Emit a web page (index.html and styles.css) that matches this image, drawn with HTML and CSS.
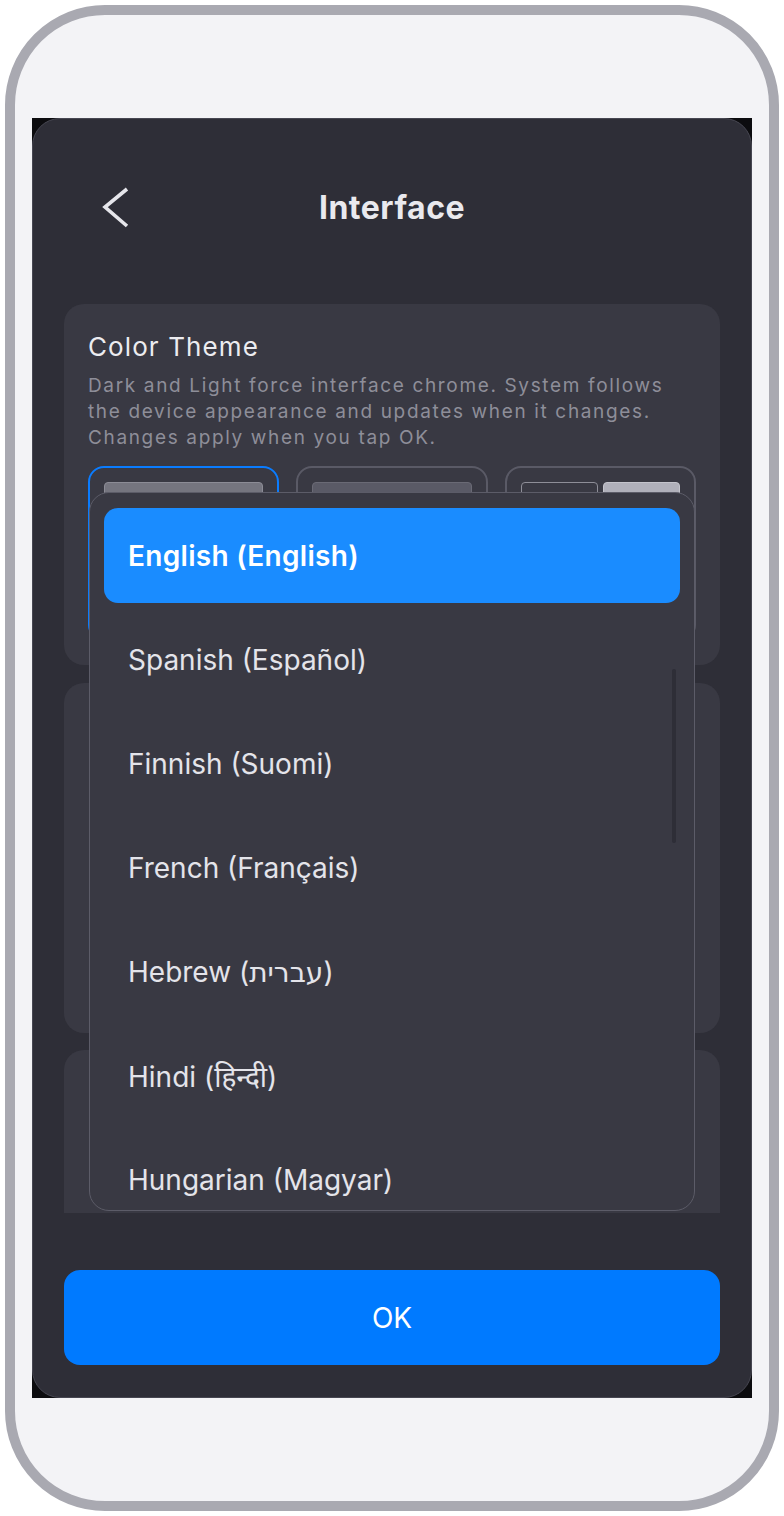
FILE: index.html
```html
<!DOCTYPE html>
<html lang="en">
<head>
<meta charset="utf-8">
<title>Interface</title>
<link rel="stylesheet" href="styles.css">
</head>
<body>
<div class="phone">
  <div class="screen">
    <div class="panel">
      <header class="header">
        <button class="back" aria-label="Back">
          <svg width="30" height="44" viewBox="0 0 30 44"><polyline points="26,4 4,22 26,41" fill="none" stroke="#e6e6eb" stroke-width="3.6" stroke-linecap="butt" stroke-linejoin="miter"/></svg>
        </button>
        <h1 class="title">Interface</h1>
        <span class="spacer"></span>
      </header>

      <div class="scroll">
        <section class="card card-theme">
          <h2 class="card-title">Color Theme</h2>
          <p class="card-desc">Dark and Light force interface chrome. System follows the device appearance and updates when it changes. Changes apply when you tap OK.</p>
          <div class="options">
            <div class="option selected"><div class="thumb thumb-dark"></div></div>
            <div class="option"><div class="thumb thumb-mid"></div></div>
            <div class="option"><div class="thumb-split"><div class="half half-dark"></div><div class="half half-light"></div></div></div>
          </div>
        </section>
        <section class="card card-lang"></section>
        <section class="card card-more"></section>

        <div class="dropdown" role="listbox">
          <div class="item active">English (English)</div>
          <div class="item">Spanish (Español)</div>
          <div class="item">Finnish (Suomi)</div>
          <div class="item">French (Français)</div>
          <div class="item">Hebrew (עברית)</div>
          <div class="item">Hindi (हिन्दी)</div>
          <div class="item">Hungarian (Magyar)</div>
          <div class="scrollbar"></div>
        </div>
      </div>

      <button class="ok">OK</button>
    </div>
  </div>
</div>
</body>
</html>
```

FILE: styles.css
```css
* { box-sizing: border-box; }
html, body { margin: 0; padding: 0; background: #ffffff; }
body {
  font-family: Inter, "Noto Sans", "DejaVu Sans", "Liberation Sans", sans-serif;
  padding: 5px;
}
.phone {
  width: 774px;
  height: 1506px;
  border: 10px solid #a9a9b1;
  border-radius: 100px;
  background: #f3f3f6;
  padding: 103px 17px;
}
.screen {
  width: 720px;
  height: 1280px;
  background: #0c0c0f;
}
.panel {
  height: 100%;
  background: #2e2e37;
  border: 1px solid #474752;
  border-radius: 28px;
  padding: 58px 31px 32px;
  display: flex;
  flex-direction: column;
}
.header {
  height: 60px;
  display: grid;
  grid-template-columns: 1fr auto 1fr;
  align-items: center;
}
.back {
  background: none;
  border: 0;
  padding: 0;
  margin-left: 37px;
  width: 30px;
  height: 44px;
  justify-self: start;
  display: block;
}
.back svg { display: block; }
.title {
  margin: 0;
  font-size: 32px;
  font-weight: 700;
  color: #e9e9ee;
  letter-spacing: 0.5px;
}
.scroll {
  position: relative;
  margin-top: 67px;
  height: 909px;
  overflow: hidden;
  display: flex;
  flex-direction: column;
  gap: 18px;
}
.card {
  flex: none;
  background: #393943;
  border-radius: 20px;
}
.card-theme { height: 361px; padding: 27px 24px 24px; }
.card-lang { height: 350px; }
.card-more { height: 400px; margin-top: -1px; }
.card-title {
  margin: 0;
  font-size: 26px;
  line-height: 32px;
  font-weight: 400;
  letter-spacing: 1.1px;
  color: #ececf0;
}
.card-desc {
  margin: 10px 0 0;
  font-size: 19px;
  line-height: 26px;
  letter-spacing: 1.65px;
  color: #8e8e99;
}
.options {
  margin-top: 15px;
  display: grid;
  grid-template-columns: repeat(3, 1fr);
  gap: 17px;
  height: 175px;
}
.option {
  border: 2px solid #5a5a66;
  border-radius: 16px;
  padding: 14px;
}
.option.selected { border-color: #0a7cff; }
.thumb {
  height: 90px;
  border-radius: 4px;
}
.thumb-dark { background: #75757f; border: 1px solid #8c8c96; }
.thumb-mid { background: #5a5a66; border: 1px solid #6a6a75; }
.thumb-split { display: flex; gap: 5px; height: 90px; }
.half { flex: 1; border-radius: 4px; }
.half-dark { background: #393943; border: 1px solid #8e8e98; }
.half-light { background: #b0b0ba; border: 1px solid #c4c4cc; }

.dropdown {
  position: absolute;
  left: 25px;
  top: 188px;
  width: 606px;
  height: 719px;
  background: #393943;
  border: 1px solid #5c5c68;
  border-radius: 20px;
  padding: 15px 14px;
  overflow: hidden;
  display: flex;
  flex-direction: column;
  gap: 9px;
}
.item {
  flex: none;
  height: 95px;
  border-radius: 14px;
  padding-left: 24px;
  display: flex;
  align-items: center;
  font-size: 28px;
  color: #e4e4ea;
}
.item.active {
  background: #1a8cff;
  color: #ffffff;
  font-weight: 600;
  letter-spacing: 0.3px;
}
.scrollbar {
  position: absolute;
  right: 18px;
  top: 176px;
  width: 4px;
  height: 174px;
  border-radius: 2px;
  background: #2e2e37;
}
.ok {
  margin-top: 57px;
  height: 95px;
  border: 0;
  border-radius: 16px;
  background: #007aff;
  color: #ffffff;
  font-family: inherit;
  font-size: 28px;
  font-weight: 400;
}
```
